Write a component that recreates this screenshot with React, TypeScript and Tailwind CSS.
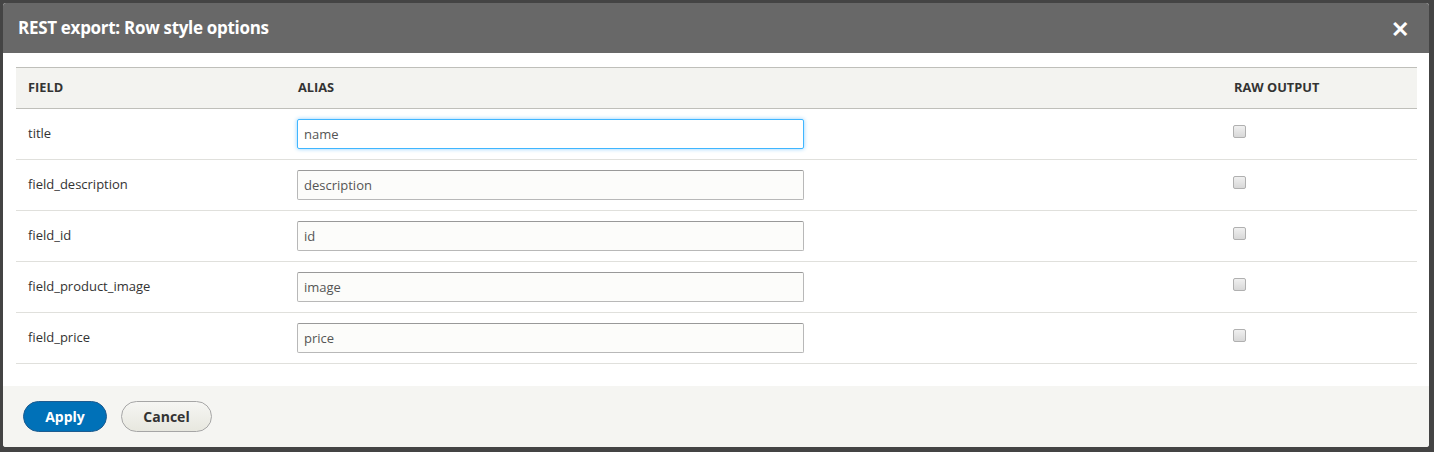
import React from 'react'

const rows = [
    { field: 'title', alias: 'name', focused: true },
    { field: 'field_description', alias: 'description' },
    { field: 'field_id', alias: 'id' },
    { field: 'field_product_image', alias: 'image' },
    { field: 'field_price', alias: 'price' },
]

const RowStyleOptions = () => {
    return (
        <div className="w-[1434px] h-[452px] bg-[#444444] p-[3px] pr-[5px] pb-[5px] font-['Open_Sans','Liberation_Sans',sans-serif]">
            <div className="h-full flex flex-col bg-white rounded-[3px] overflow-hidden">
                <div className="h-[50px] shrink-0 bg-[#686868] flex items-center justify-between pl-[15px] pr-[20px]">
                    <h1 className="text-white text-[17px] font-bold tracking-[-0.3px]">
                        REST export: Row style options
                    </h1>
                    <span className="text-white text-[22px] font-bold leading-none">✕</span>
                </div>
                <div className="flex-1 pt-[14px] pl-[13px] pr-[12px]">
                    <table className="w-full border-collapse text-[13px] text-[#333]">
                        <thead>
                            <tr className="bg-[#f3f3f0] border-y border-[#bfbfba] h-[41px]">
                                <th className="w-[270px] text-left font-bold text-[12.8px] px-3">FIELD</th>
                                <th className="w-[936px] text-left font-bold text-[12.8px] px-3">ALIAS</th>
                                <th className="text-left font-bold text-[12.8px] px-3">RAW OUTPUT</th>
                            </tr>
                        </thead>
                        <tbody>
                            {rows.map((r) => (
                                <tr key={r.field} className="border-b border-[#e0e0dc] h-[51px]">
                                    <td className="px-3 text-[#333]">{r.field}</td>
                                    <td className="px-[11px]">
                                        <input
                                            defaultValue={r.alias}
                                            className={
                                                r.focused
                                                    ? 'w-[507px] h-[30px] px-[6px] text-[13px] text-[#555] bg-white border border-[#40b6ff] rounded-[2px] shadow-[0_0_4px_#8fd0ff] outline-none'
                                                    : 'w-[507px] h-[30px] px-[6px] text-[13px] text-[#555] bg-[#fcfcfa] border border-[#b8b8b8] border-t-[#999] rounded-[2px] outline-none'
                                            }
                                        />
                                    </td>
                                    <td className="px-[11px] align-top pt-[16px]">
                                        <span className="block w-[13px] h-[13px] rounded-[2px] border border-[#b0b0b0] bg-gradient-to-b from-[#f0f0f0] to-[#d8d8d8]" />
                                    </td>
                                </tr>
                            ))}
                        </tbody>
                    </table>
                </div>
                <div className="h-[61px] shrink-0 bg-[#f5f5f2] flex items-center gap-[14px] pl-[20px] pb-[1px]">
                    <button className="w-[84px] h-[31px] rounded-full bg-[#0071b8] border border-[#1e5c90] text-white text-[14px] font-bold">
                        Apply
                    </button>
                    <button className="w-[91px] h-[31px] rounded-full bg-gradient-to-b from-[#f6f6f3] to-[#e7e7df] border border-[#a6a6a6] text-[#333] text-[14px] font-bold">
                        Cancel
                    </button>
                </div>
            </div>
        </div>
    )
}

export default function App() {
    return <RowStyleOptions />
}
